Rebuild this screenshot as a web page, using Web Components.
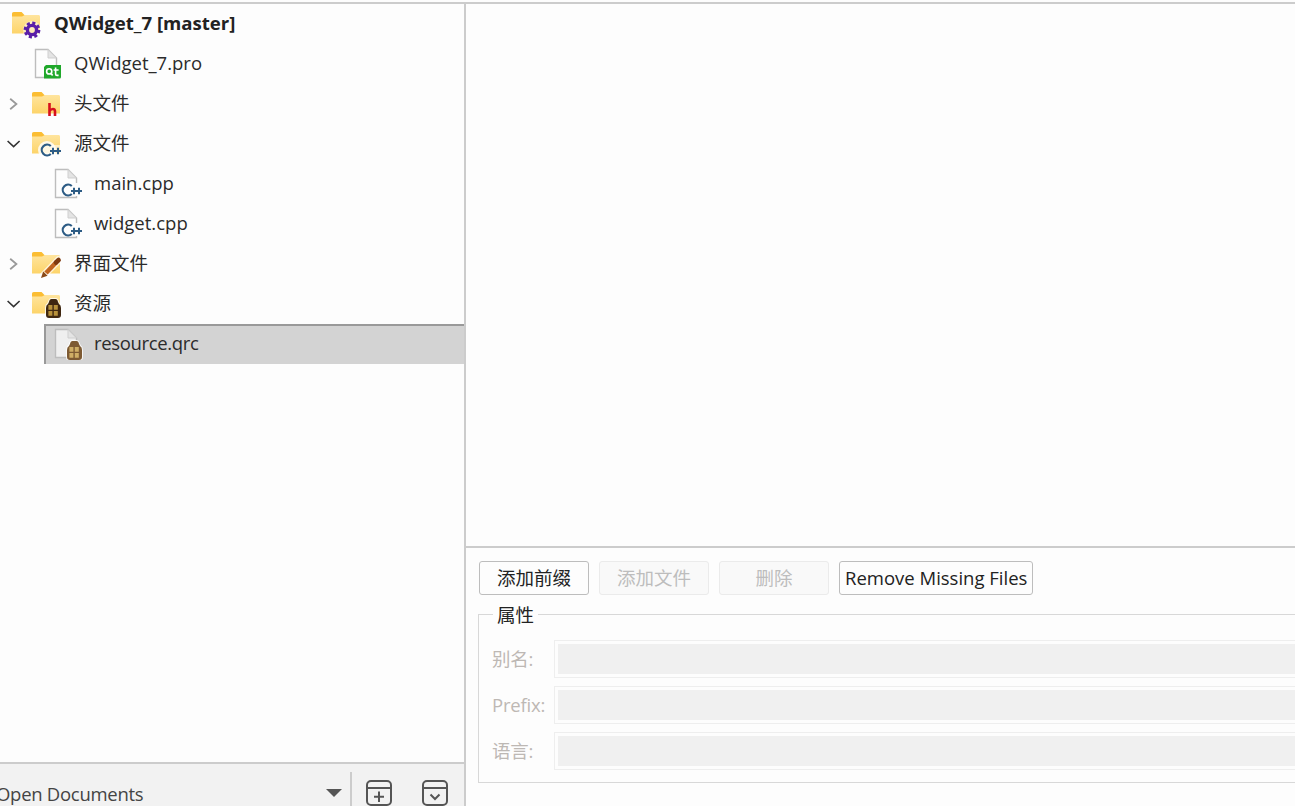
<!DOCTYPE html>
<html>
<head>
<meta charset="utf-8">
<style>
  html, body { margin: 0; height: 100%; overflow: hidden; background: #fdfdfd; }
  body { font-family: "Open Sans", "Noto Sans CJK SC", sans-serif; font-size: 18.5px; color: #2b2b2b; }
</style>
</head>
<body>
<project-app>
  <project-tree slot="left">
    <tree-row depth="0" icon="root" bold>QWidget_7 [master]</tree-row>
    <tree-row depth="1" icon="pro">QWidget_7.pro</tree-row>
    <tree-row depth="1" icon="headers" branch="closed">头文件</tree-row>
    <tree-row depth="1" icon="sources" branch="open">源文件</tree-row>
    <tree-row depth="2" icon="cpp">main.cpp</tree-row>
    <tree-row depth="2" icon="cpp">widget.cpp</tree-row>
    <tree-row depth="1" icon="forms" branch="closed">界面文件</tree-row>
    <tree-row depth="1" icon="resources" branch="open">资源</tree-row>
    <tree-row depth="2" icon="qrc" selected style="letter-spacing:-.35px">resource.qrc</tree-row>
  </project-tree>
  <open-docs-bar slot="left"></open-docs-bar>
  <resource-editor slot="right">
    <tool-button slot="buttons">添加前缀</tool-button>
    <tool-button slot="buttons" disabled>添加文件</tool-button>
    <tool-button slot="buttons" disabled>删除</tool-button>
    <tool-button slot="buttons" wide>Remove Missing Files</tool-button>
    <prop-row slot="props" label="别名:"></prop-row>
    <prop-row slot="props" label="Prefix:"></prop-row>
    <prop-row slot="props" label="语言:"></prop-row>
  </resource-editor>
</project-app>

<script>
// little marks that sit on top of the folder / file icons
const folderArt = `
  <path d="M0 2.2C0 .9.8 0 2 0h7.5l3 3H26.5c.9 0 1.5.6 1.5 1.5V21.5H0z" fill="url(#fg)"/>
  <path d="M0 2.2C0 .9.8 0 2 0h7.5l3 3.2L10 4.4H0z" fill="#fbbd33"/>
  <defs><linearGradient id="fg" x1="0" y1="0" x2="0" y2="1"><stop offset="0" stop-color="#ffe7a6"/><stop offset="1" stop-color="#fdd469"/></linearGradient></defs>`;

const fileArt = (fill) => `
  <path d="M3.5 1.5H16L24.5 10V29.5H3.5z" fill="${fill}" stroke="#bdbdbd" stroke-width="1.4"/>
  <path d="M16 1.5V10H24.5z" fill="#e4e4e4" stroke="#cfcfcf" stroke-width="1"/>`;

const cppMark = (cx, cy) => {
  const c = '#2d5c85';
  const y = cy + 1;
  const x1 = cx + 6;
  const x2 = cx + 11;
  return `<path d="M${cx + 3.8} ${cy - 4}A5.4 5.4 0 1 0 ${cx + 3.8} ${cy + 4}" fill="none" stroke="${c}" stroke-width="2.2"/>
    <path d="M${x1 - 3} ${y}H${x2 + 3}M${x1} ${y - 3.2}v6.4M${x2} ${y - 3.2}v6.4" fill="none" stroke="${c}" stroke-width="2"/>`;
};

const bagMark = (x, y, dark, win) => {
  const dome = `M${x + 5.5} ${y + 1}h5q2 0 2.5 3l1 2q2 1 2 4v7q0 3-3 3h-9q-3 0-3-3v-7q0-3 2-4l1-2q.5-3 2.5-3z`;
  return `<path d="${dome}" fill="#fff" stroke="#fff" stroke-width="2" opacity=".8"/>
    <path d="${dome}" fill="${dark}"/>
    <path d="M${x + 3.4} ${y + 7}h4v4.8h-4zM${x + 8.8} ${y + 7}h4v4.8h-4zM${x + 3.4} ${y + 13}h4v4.8h-4zM${x + 8.8} ${y + 13}h4v4.8h-4z" fill="${win}"/>`;
};

const ICONS = {
  root: `<g transform="translate(0 4)">${folderArt}</g>
    <circle cx="20" cy="22" r="9" fill="#fff" opacity=".5"/>
    <circle cx="20" cy="22" r="4.6" fill="none" stroke="#5a1ea8" stroke-width="3.4"/>
    <circle cx="20" cy="22" r="7" fill="none" stroke="#5a1ea8" stroke-width="2.8" stroke-dasharray="3.1 2.4"/>`,
  pro: fileArt('#fdfdfd') + `
    <path d="M14 17H29V29q0 1.5-1.5 1.5H12V19z" fill="#20a82b"/>
    <circle cx="17.2" cy="23.4" r="2.6" fill="none" stroke="#fff" stroke-width="1.6"/>
    <path d="M19.2 25.5l1.4 2M23.6 19.6v6.4q0 1.4 1.4 1.4h1.6M21.6 22h5" fill="none" stroke="#fff" stroke-width="1.6"/>`,
  headers: `<g transform="translate(0 4)">${folderArt}</g>
    <path d="M17.5 15V28M17.5 23q1.5-2 3.4-2t2.1 2.2V28" fill="none" stroke="#d60f1d" stroke-width="2.6"/>`,
  sources: `<g transform="translate(0 4)">${folderArt}</g>
    <circle cx="15" cy="22" r="9" fill="#fff" opacity=".8"/>
    <rect x="20" y="17" width="8" height="9" fill="#fff" opacity=".55"/>` + cppMark(15, 22),
  cpp: fileArt('#fdfdfd') + `<rect x="8" y="15" width="21" height="13" fill="#fdfdfd"/>` + cppMark(16, 22),
  forms: `<g transform="translate(0 4)">${folderArt}</g>
    <g transform="translate(0 4)">
      <path d="M10 25L26.5 8" stroke="#fff" stroke-width="7.5" opacity=".7" stroke-linecap="round"/>
      <path d="M14 21L24.5 10" stroke="#c0641f" stroke-width="4.6"/>
      <path d="M24 10.5L26.6 8" stroke="#7e3a10" stroke-width="4.6" stroke-linecap="round"/>
      <path d="M9 26l2.2-6.6 4.4 4.4z" fill="#8a4a18"/>
    </g>`,
  resources: `<g transform="translate(0 4)">${folderArt}</g>` + bagMark(13, 10, '#3f2710', '#b8913a'),
  qrc: fileArt('#efefef') + bagMark(14, 12, '#7d5a33', '#cfae66')
};

class ProjectApp extends HTMLElement {
  constructor() {
    super();
    const shadow = this.attachShadow({ mode: 'open' });
    shadow.innerHTML = `
      <style>
        :host { display: flex; height: 806px; box-sizing: border-box; padding-top: 2px; }
        .left { display: flex; flex-direction: column; width: 464px; flex: none; border-top: 2px solid #cccccc; }
        .split { width: 2px; flex: none; background: #cccccc; }
        .right { flex: 1; min-width: 0; display: flex; flex-direction: column; border-top: 2px solid #cccccc; overflow: hidden; }
      </style>
      <div class="left"><slot name="left"></slot></div>
      <div class="split"></div>
      <div class="right"><slot name="right"></slot></div>
    `;
  }
}

class ProjectTree extends HTMLElement {
  constructor() {
    super();
    const shadow = this.attachShadow({ mode: 'open' });
    shadow.innerHTML = `
      <style>
        :host { display: block; flex: 1; min-height: 0; background: #fdfdfd; }
      </style>
      <slot></slot>
    `;
  }
}

class TreeRow extends HTMLElement {
  constructor() {
    super();
    const shadow = this.attachShadow({ mode: 'open' });
    shadow.innerHTML = `
      <style>
        :host { display: flex; height: 40px; }
        :host([bold]) { font-weight: 700; font-size: 18.6px; color: #222; }
        .gutter { flex: none; display: flex; justify-content: flex-end; }
        .body { flex: 1; display: flex; align-items: center; gap: 10px; padding-left: 8px; box-sizing: border-box; white-space: nowrap; }
        .text { padding-bottom: 4px; }
        :host([selected]) .body { background: #d3d3d3; border-top: 2px solid #999; border-left: 2px solid #999; padding-left: 6px; padding-bottom: 2px; }
        svg { display: block; flex: none; }
      </style>
      <div class="gutter" id="gutter"></div>
      <div class="body"><span id="icon"></span><span class="text"><slot></slot></span></div>
    `;
  }

  connectedCallback() {
    const depth = Number(this.getAttribute('depth') || 0);
    const gutter = this.shadowRoot.getElementById('gutter');
    gutter.style.width = (4 + 20 * depth) + 'px';
    const branch = this.getAttribute('branch');
    if (branch === 'closed') {
      gutter.innerHTML = '<svg width="20" height="40"><path d="M6.2 14.8L12.4 20L6.2 25.2" fill="none" stroke="#9a9a9a" stroke-width="1.8"/></svg>';
    } else if (branch === 'open') {
      gutter.innerHTML = '<svg width="20" height="40"><path d="M3.6 17L9.6 22.6L15.6 17" fill="none" stroke="#333" stroke-width="1.6"/></svg>';
    }
    const icon = this.shadowRoot.getElementById('icon');
    icon.innerHTML = `<svg width="32" height="32" viewBox="0 0 32 32">${ICONS[this.getAttribute('icon')]}</svg>`;
  }
}

class OpenDocsBar extends HTMLElement {
  constructor() {
    super();
    const shadow = this.attachShadow({ mode: 'open' });
    shadow.innerHTML = `
      <style>
        :host { display: flex; flex: none; height: 42px; background: #f2f2f2; border-top: 2px solid #cccccc; color: #444; overflow: hidden; }
        .title { flex: 1; margin-left: -4px; padding-top: 17px; line-height: 26px; white-space: nowrap; letter-spacing: -.28px; }
        .arrow { flex: none; width: 16px; height: 8px; margin: 25px 8px 0 0; background: #555; clip-path: polygon(0 0, 100% 0, 50% 100%); }
        .sep { flex: none; width: 2px; height: 34px; margin-top: 8px; background: #cccccc; }
        .btns { flex: none; display: flex; gap: 30px; padding: 16px 16px 0 14px; }
        svg { display: block; flex: none; }
      </style>
      <div class="title">Open Documents</div>
      <div class="arrow"></div>
      <div class="sep"></div>
      <div class="btns">
        <svg width="26" height="26" viewBox="0 0 26 26"><rect x="1" y="1" width="24" height="24" rx="4" fill="none" stroke="#555" stroke-width="2"/><path d="M1 8H25M13 11.5V22M8 16.7H18" fill="none" stroke="#555" stroke-width="2"/></svg>
        <svg width="26" height="26" viewBox="0 0 26 26"><rect x="1" y="1" width="24" height="24" rx="4" fill="none" stroke="#555" stroke-width="2"/><path d="M1 8H25M8.5 14.5L13 19L17.5 14.5" fill="none" stroke="#555" stroke-width="2"/></svg>
      </div>
    `;
  }
}

class ResourceEditor extends HTMLElement {
  constructor() {
    super();
    const shadow = this.attachShadow({ mode: 'open' });
    shadow.innerHTML = `
      <style>
        :host { display: flex; flex-direction: column; flex: 1; min-height: 0; }
        .view { flex: 1; background: #fdfdfd; }
        .panel { flex: none; height: 260px; box-sizing: border-box; border-top: 2px solid #cccccc; padding: 13px 0 0 12px; background: #fdfdfd; }
        .buttons { display: flex; gap: 10px; margin-left: 1px; }
        fieldset { margin: 6px -30px 0 0; padding: 0 0 12px 13px; border: 1px solid #d8d8d8; height: 182px; box-sizing: border-box; }
        legend { margin-left: 1px; padding: 3px 4px 1px; color: #222; line-height: 22px; }
        .props { display: flex; flex-direction: column; gap: 8px; margin-top: 13px; }
      </style>
      <div class="view"></div>
      <div class="panel">
        <div class="buttons"><slot name="buttons"></slot></div>
        <fieldset>
          <legend>属性</legend>
          <div class="props"><slot name="props"></slot></div>
        </fieldset>
      </div>
    `;
  }
}

class ToolButton extends HTMLElement {
  constructor() {
    super();
    const shadow = this.attachShadow({ mode: 'open' });
    shadow.innerHTML = `
      <style>
        :host { display: flex; align-items: center; justify-content: center; box-sizing: border-box; width: 110px; height: 34px; padding-bottom: 2px; border: 1px solid #bdbdbd; border-radius: 3px; background: #fdfdfd; color: #222; white-space: nowrap; overflow: hidden; }
        :host([disabled]) { border-color: #ebebeb; background: #f9f9f9; color: #bdbdbd; }
        :host([wide]) { width: 194px; padding: 0 4px 2px 5px; justify-content: flex-start; }
      </style>
      <slot></slot>
    `;
  }
}

class PropRow extends HTMLElement {
  constructor() {
    super();
    const shadow = this.attachShadow({ mode: 'open' });
    shadow.innerHTML = `
      <style>
        :host { display: flex; align-items: center; height: 38px; color: #bdb8b4; }
        .label { flex: none; width: 62px; padding-bottom: 2px; white-space: nowrap; letter-spacing: -.2px; }
        .field { flex: 1; height: 100%; box-sizing: border-box; border: 1px solid #eeeeee; padding: 3px; }
        .fill { height: 100%; background: #f0f0f0; }
      </style>
      <div class="label" id="label"></div>
      <div class="field"><div class="fill"></div></div>
    `;
  }

  connectedCallback() {
    this.shadowRoot.getElementById('label').textContent = this.getAttribute('label');
  }
}

customElements.define('project-app', ProjectApp);
customElements.define('project-tree', ProjectTree);
customElements.define('tree-row', TreeRow);
customElements.define('open-docs-bar', OpenDocsBar);
customElements.define('resource-editor', ResourceEditor);
customElements.define('tool-button', ToolButton);
customElements.define('prop-row', PropRow);
</script>
</body>
</html>
